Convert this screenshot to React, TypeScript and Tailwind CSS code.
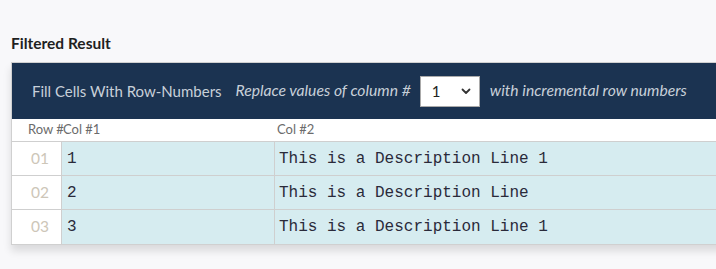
import React from "react";

const rows = [
  { n: "01", c1: "1", c2: "This is a Description Line 1" },
  { n: "02", c1: "2", c2: "This is a Description Line" },
  { n: "03", c1: "3", c2: "This is a Description Line 1" },
];

export default function App() {
  return (
    <div className="w-[716px] h-[269px] overflow-hidden bg-[#f8f8fa] font-['Lato',sans-serif]">
      <div className="pt-[34px] pl-[11px]">
        <div className="text-[15.5px] font-bold text-[#1f1f1f] leading-[18px] mb-[10px]">Filtered Result</div>
        <div className="w-[740px] border border-[#d0d0d0] bg-white shadow-[0_6px_8px_rgba(0,0,0,0.12)]">
          <div className="h-[56px] bg-[#1b3351] flex items-center pl-[20px] text-[15px] text-[#c8d0d9] whitespace-nowrap">
            <span>Fill Cells With Row-Numbers</span>
            <span className="italic ml-[14px] text-[15.7px]">Replace values of column #</span>
            <div className="ml-[9px] w-[60px] h-[31px] bg-white border border-[#aaa] flex items-center justify-between pl-[11px] pr-[7px] text-[#222]">
              <span className="text-[15px]">1</span>
              <svg width="12" height="12" viewBox="0 0 12 12" fill="none">
                <path d="M2.5 4.5 L6 8 L9.5 4.5" stroke="#333" strokeWidth="1.8" strokeLinecap="round" strokeLinejoin="round" />
              </svg>
            </div>
            <span className="italic ml-[10px] text-[15.7px]">with incremental row numbers</span>
          </div>
          <div className="grid grid-cols-[50px_213px_1fr] h-[23px] items-center text-[13px] text-[#6b6b6b] border-b border-[#cfcfcf] whitespace-nowrap">
            <div className="pl-[16px]">Row #</div>
            <div className="pl-[1px]">Col #1</div>
            <div className="pl-[2px]">Col #2</div>
          </div>
          {rows.map((r, i) => (
            <div
              key={r.n}
              className={`grid grid-cols-[50px_213px_1fr] h-[34px] ${i < rows.length - 1 ? "border-b border-[#cfcfcf]" : ""}`}
            >
              <div className="bg-white border-r border-[#cfcfcf] flex items-center justify-end pr-[12px] text-[15.5px] text-[#cdc6b8]">
                {r.n}
              </div>
              <div className="bg-[#d6ecf0] border-r border-[#cfcfcf] flex items-center pl-[5px] text-[16px] text-[#2a2a3a] font-['Liberation_Mono',monospace]">
                {r.c1}
              </div>
              <div className="bg-[#d6ecf0] flex items-center pl-[4px] text-[16px] text-[#2a2a3a] font-['Liberation_Mono',monospace] whitespace-nowrap">
                {r.c2}
              </div>
            </div>
          ))}
        </div>
      </div>
    </div>
  );
}
